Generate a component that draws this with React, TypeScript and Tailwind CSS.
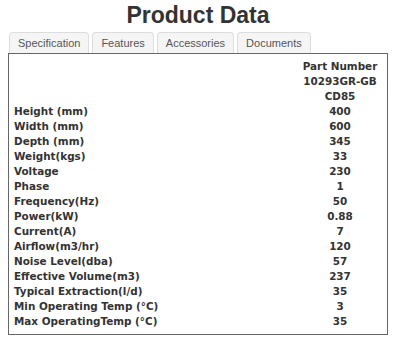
const specs: [string, string][] = [
  ["Height (mm)", "400"],
  ["Width (mm)", "600"],
  ["Depth (mm)", "345"],
  ["Weight(kgs)", "33"],
  ["Voltage", "230"],
  ["Phase", "1"],
  ["Frequency(Hz)", "50"],
  ["Power(kW)", "0.88"],
  ["Current(A)", "7"],
  ["Airflow(m3/hr)", "120"],
  ["Noise Level(dba)", "57"],
  ["Effective Volume(m3)", "237"],
  ["Typical Extraction(l/d)", "35"],
  ["Min Operating Temp (°C)", "3"],
  ["Max OperatingTemp (°C)", "35"],
];

const tabs = ["Specification", "Features", "Accessories", "Documents"];

export default function App() {
  return (
    <main className="w-[396px] h-[341px] bg-white px-2">
      <h1 className="h-8 pt-[1px] text-center text-[23px] leading-[28px] font-bold text-[#333] font-['Liberation_Sans',Arial,sans-serif]">
        Product Data
      </h1>
      <div className="flex gap-[3px] pl-[1px] h-[21px]">
        {tabs.map((t) => (
          <div
            key={t}
            className="px-2 border border-b-0 border-[#ddd] rounded-t-[4px] bg-[#f5f5f5] text-[11px] leading-[20px] text-[#555] font-['Liberation_Sans',Arial,sans-serif]"
          >
            {t}
          </div>
        ))}
      </div>
      <div className="border border-[#666] px-[5px] pt-[5px] pb-[5px] font-['DejaVu_Sans',Verdana,sans-serif] text-[10.4px] leading-[15px] font-bold text-[#333]">
        <div className="grid grid-cols-[1fr_84px]">
          <div />
          <div className="text-center">
            Part Number
            <br />
            10293GR-GB
            <br />
            CD85
          </div>
          {specs.map(([k, v]) => (
            <div key={k} className="contents">
              <div>{k}</div>
              <div className="text-center">{v}</div>
            </div>
          ))}
        </div>
      </div>
    </main>
  );
}
